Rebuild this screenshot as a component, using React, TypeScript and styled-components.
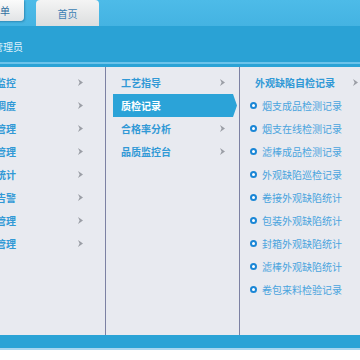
import React from "react";
import styled, { createGlobalStyle } from "styled-components";

const GlobalStyle = createGlobalStyle`
  html, body { margin: 0; padding: 0; background: #ffffff; }
  body { font-family: "Noto Sans CJK SC", "Noto Sans", sans-serif; }
`;

const Page = styled.div`
  width: 360px;
  height: 360px;
  overflow: hidden;
  display: flex;
  flex-direction: column;
  background: #ffffff;
`;

const TopBar = styled.div`
  height: 26px;
  flex: none;
  display: flex;
  align-items: flex-start;
  background: linear-gradient(#4dbbe8, #44b3e2);
`;

const MenuTab = styled.div`
  height: 21px;
  margin-left: -30px;
  padding: 0 14px 0 20px;
  display: flex;
  align-items: center;
  font-size: 10px;
  color: #2f6f9f;
  background: linear-gradient(#fbfbfb, #e2e4e6);
  border-radius: 0 0 4px 0;
  box-shadow: 1px 1px 2px rgba(0, 60, 100, 0.35);
`;

const HomeTab = styled.div`
  width: 63px;
  height: 26px;
  margin-left: 12px;
  display: flex;
  align-items: center;
  justify-content: center;
  font-size: 10px;
  color: #3b7fb4;
  background: linear-gradient(#f4f4f4, #dcdedf);
  border-radius: 4px 4px 0 0;
`;

const Band = styled.div`
  height: 36px;
  flex: none;
  display: flex;
  align-items: center;
  padding-top: 4px;
  box-sizing: border-box;
  background: #2aa2d5;
`;

const UserText = styled.span`
  margin-left: -37px;
  font-size: 10px;
  color: #dff1fb;
  white-space: nowrap;
`;

const Stripe = styled.div`
  height: 3px;
  flex: none;
  border-top: 2px solid #6cc3ea;
  background: #2ba3d6;
`;

const Panel = styled.div`
  height: 268px;
  flex: none;
  display: flex;
  background: #e8eaf0;
`;

const Column = styled.div<{ $w?: number }>`
  ${(p) => (p.$w ? `width: ${p.$w}px; flex: none;` : "flex: 1;")}
  box-sizing: border-box;
  padding-top: 4px;
  overflow: hidden;
  display: flex;
  flex-direction: column;
  border-right: ${(p) => (p.$w ? "1px solid #7c81a3" : "none")};
`;

const LeftRow = styled.div`
  height: 23px;
  display: flex;
  align-items: center;
  padding-right: 22px;
`;

const LeftLabel = styled.span`
  flex: 1;
  margin-left: -24px;
  font-size: 10px;
  font-weight: bold;
  color: #3199d6;
  white-space: nowrap;
`;

const MidRow = styled.div<{ $active?: boolean }>`
  height: 23px;
  margin-left: 7px;
  width: 124px;
  display: flex;
  align-items: center;
  padding: 0 12px 0 8px;
  box-sizing: border-box;
  background: ${(p) => (p.$active ? "#2ba3d8" : "transparent")};
  clip-path: ${(p) =>
    p.$active
      ? "polygon(0 0, calc(100% - 4px) 0, 100% 50%, calc(100% - 4px) 100%, 0 100%)"
      : "none"};
`;

const MidLabel = styled.span<{ $active?: boolean }>`
  flex: 1;
  font-size: 10px;
  font-weight: bold;
  color: ${(p) => (p.$active ? "#ffffff" : "#3199d6")};
  white-space: nowrap;
`;

const RightHeader = styled.div`
  height: 23px;
  display: flex;
  align-items: center;
  padding: 0 2px 0 15px;
`;

const RightHeaderLabel = styled.span`
  flex: 1;
  font-size: 10px;
  font-weight: bold;
  color: #3199d6;
  white-space: nowrap;
`;

const RightItem = styled.div`
  height: 23px;
  display: flex;
  align-items: center;
  gap: 5px;
  padding-left: 10px;
`;

const Bullet = styled.span`
  width: 7px;
  height: 7px;
  box-sizing: border-box;
  border-radius: 50%;
  border: 2px solid #1a86d6;
  background: #ffffff;
  flex: none;
`;

const RightLabel = styled.span`
  font-size: 10px;
  color: #4aa4de;
  white-space: nowrap;
`;

const Footer = styled.div`
  height: 13px;
  flex: none;
  background: #2aa3d6;
  border-bottom: 2px solid #a8d6ef;
`;

const Chevron = () => (
  <svg width="5" height="7" viewBox="0 0 5 7" style={{ flex: "none" }}>
    <path d="M0 0 L5 3.5 L0 7 L1.6 3.5 Z" fill="#9b9ea6" />
  </svg>
);

const leftItems = [
  "生产监控",
  "生产调度",
  "设备管理",
  "物料管理",
  "报表统计",
  "异常告警",
  "能源管理",
  "系统管理",
];

const midItems = ["工艺指导", "质检记录", "合格率分析", "品质监控台"];

const rightItems = [
  "烟支成品检测记录",
  "烟支在线检测记录",
  "滤棒成品检测记录",
  "外观缺陷巡检记录",
  "卷接外观缺陷统计",
  "包装外观缺陷统计",
  "封箱外观缺陷统计",
  "滤棒外观缺陷统计",
  "卷包来料检验记录",
];

export default function App() {
  return (
    <>
      <GlobalStyle />
      <Page>
        <TopBar>
          <MenuTab>菜单</MenuTab>
          <HomeTab>首页</HomeTab>
        </TopBar>
        <Band>
          <UserText>您好，管理员</UserText>
        </Band>
        <Stripe />
        <Panel>
          <Column $w={106}>
            {leftItems.map((t) => (
              <LeftRow key={t}>
                <LeftLabel>{t}</LeftLabel>
                <Chevron />
              </LeftRow>
            ))}
          </Column>
          <Column $w={134}>
            {midItems.map((t, i) => (
              <MidRow key={t} $active={i === 1}>
                <MidLabel $active={i === 1}>{t}</MidLabel>
                {i !== 1 && <Chevron />}
              </MidRow>
            ))}
          </Column>
          <Column>
            <RightHeader>
              <RightHeaderLabel>外观缺陷自检记录</RightHeaderLabel>
              <Chevron />
            </RightHeader>
            {rightItems.map((t) => (
              <RightItem key={t}>
                <Bullet />
                <RightLabel>{t}</RightLabel>
              </RightItem>
            ))}
          </Column>
        </Panel>
        <Footer />
      </Page>
    </>
  );
}
